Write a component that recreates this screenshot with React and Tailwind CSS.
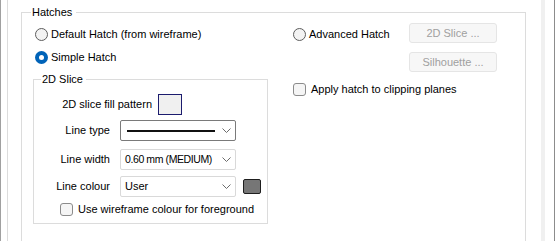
import React from "react";

const font = { fontFamily: '"Liberation Sans", Arial, sans-serif' };

const Radio = ({ checked, label }) => (
  <div className="flex items-center h-[23px]">
    {checked ? (
      <span className="w-[13px] h-[13px] rounded-full bg-[#0063b8] flex items-center justify-center">
        <span className="w-[5px] h-[5px] rounded-full bg-white" />
      </span>
    ) : (
      <span className="w-[13px] h-[13px] rounded-full border border-[#5d5d5d] bg-[#f3f3f3]" />
    )}
    <span className="ml-[3px]">{label}</span>
  </div>
);

const Checkbox = ({ label }) => (
  <div className="flex items-center h-[19px]">
    <span className="w-[13px] h-[13px] rounded-[3px] border border-[#8b8b8b] bg-[#f5f5f5]" />
    <span className="ml-[5px]">{label}</span>
  </div>
);

const Chevron = () => (
  <svg width="9" height="5" viewBox="0 0 9 5" className="shrink-0">
    <polyline points="0.5,0.5 4.5,4.5 8.5,0.5" fill="none" stroke="#6b6b6b" strokeWidth="1" />
  </svg>
);

const Select = ({ children, dark }) => (
  <div
    className={`w-[116px] h-[21px] bg-white border rounded-[2px] flex items-center pl-[4px] pr-[4px] ${
      dark ? "border-[#7a7a7a]" : "border-[#d9d9d9]"
    }`}
  >
    <div className="flex-1 flex items-center">{children}</div>
    <Chevron />
  </div>
);

const Row = ({ label, children }) => (
  <div className="flex items-center">
    <div className="w-[76px] text-right">{label}</div>
    <div className="ml-[10px] flex items-center">{children}</div>
  </div>
);

const Button = ({ children }) => (
  <div className="w-[88px] h-[20px] rounded-[3px] border border-[#e5e5e5] bg-[#f7f7f7] text-[#a0a0a0] flex items-center justify-center">
    {children}
  </div>
);

export default function App() {
  return (
    <div
      className="w-[555px] h-[241px] bg-white text-[11px] text-black flex overflow-hidden whitespace-nowrap"
      style={font}
    >
      <div className="w-px bg-[#a0a0a0]" />
      <div className="w-[6px]" />
      <div className="w-px bg-[#dcdcdc]" />
      <div className="w-[13px]" />

      <fieldset className="w-[505px] h-[260px] border border-[#dcdcdc] mt-[4px] shrink-0">
        <legend className="ml-[9px] pl-[1px] pr-[4px] leading-[16px]">Hatches</legend>
        <div className="flex pt-[3px]">
          <div className="w-[248px] shrink-0 pl-[13px]">
            <Radio label="Default Hatch (from wireframe)" />
            <Radio checked label="Simple Hatch" />

            <fieldset className="w-[235px] h-[153px] border border-[#dcdcdc] -ml-[2px] mt-[2px]">
              <legend className="ml-[7px] pl-[1px] pr-[3px] leading-[16px]">2D Slice</legend>
              <div className="pt-[7px] flex flex-col">
                <div className="flex items-center">
                  <div className="w-[118px] text-right">2D slice fill pattern</div>
                  <div className="ml-[6px] w-[24px] h-[21px] border border-[#1c1c6e] bg-[#f0f0f0]" />
                </div>
                <div className="mt-[5px]">
                  <Row label="Line type">
                    <Select dark>
                      <div className="w-[88px] h-[2px] bg-[#111] ml-[2px]" />
                    </Select>
                  </Row>
                </div>
                <div className="mt-[8px]">
                  <Row label="Line width">
                    <Select>
                      <span className="text-[10.5px] tracking-[-0.4px]">0.60 mm (MEDIUM)</span>
                    </Select>
                  </Row>
                </div>
                <div className="mt-[6px]">
                  <Row label="Line colour">
                    <Select>User</Select>
                    <div className="ml-[7px] w-[18px] h-[15px] rounded-[2px] border border-[#1e1e1e] bg-[#767676]" />
                  </Row>
                </div>
                <div className="mt-[3px] pl-[26px]">
                  <Checkbox label="Use wireframe colour for foreground" />
                </div>
              </div>
            </fieldset>
          </div>

          <div className="flex-1 pl-[23px]">
            <div className="flex items-start">
              <div className="w-[116px]">
                <Radio label="Advanced Hatch" />
              </div>
              <Button>2D Slice ...</Button>
            </div>
            <div className="ml-[116px] mt-[6px]">
              <Button>Silhouette ...</Button>
            </div>
            <div className="mt-[8px]">
              <Checkbox label="Apply hatch to clipping planes" />
            </div>
          </div>
        </div>
      </fieldset>

      <div className="w-[15px]" />
      <div className="w-[4px] bg-[#f0f0f0]" />
      <div className="w-[9px]" />
      <div className="w-px bg-[#8c8c8c]" />
    </div>
  );
}
